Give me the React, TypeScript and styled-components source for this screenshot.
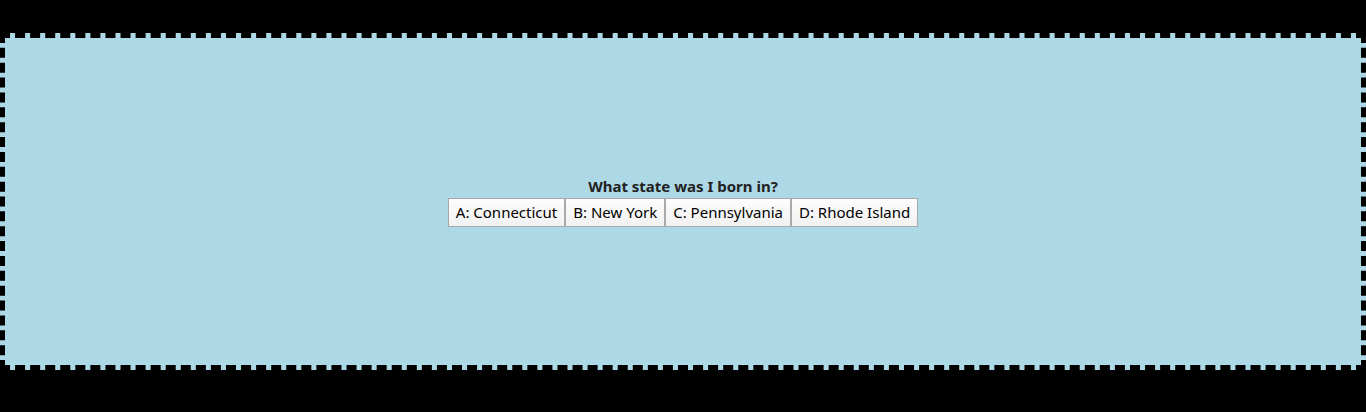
import React from "react";
import styled, { createGlobalStyle } from "styled-components";

const Global = createGlobalStyle`
  html, body { margin: 0; padding: 0; background: #000; }
  body { font-family: "Noto Sans", "Open Sans", sans-serif; }
`;

const Stage = styled.div`
  padding-top: 33px;
`;

const Panel = styled.section`
  box-sizing: border-box;
  height: 337px;
  width: 100%;
  background: #add8e6;
  border: 5px dashed #000;
  display: flex;
  flex-direction: column;
  align-items: center;
  justify-content: center;
`;

const Question = styled.div`
  font-weight: 700;
  font-size: 15px;
  line-height: 20px;
  color: #222;
`;

const Options = styled.div`
  display: flex;
  margin-top: 2px;
`;

const Choice = styled.button`
  font-family: inherit;
  font-size: 15px;
  line-height: 19px;
  color: #000;
  padding: 4px 7px 4px;
  border: 1px solid #a9a9a9;
  background: linear-gradient(#fdfdfd, #f1f1f1);
  cursor: pointer;
`;

const choices = ["A: Connecticut", "B: New York", "C: Pennsylvania", "D: Rhode Island"];

export default function App() {
  return (
    <>
      <Global />
      <Stage>
        <Panel>
          <Question>What state was I born in?</Question>
          <Options>
            {choices.map((c) => (
              <Choice key={c}>{c}</Choice>
            ))}
          </Options>
        </Panel>
      </Stage>
    </>
  );
}
